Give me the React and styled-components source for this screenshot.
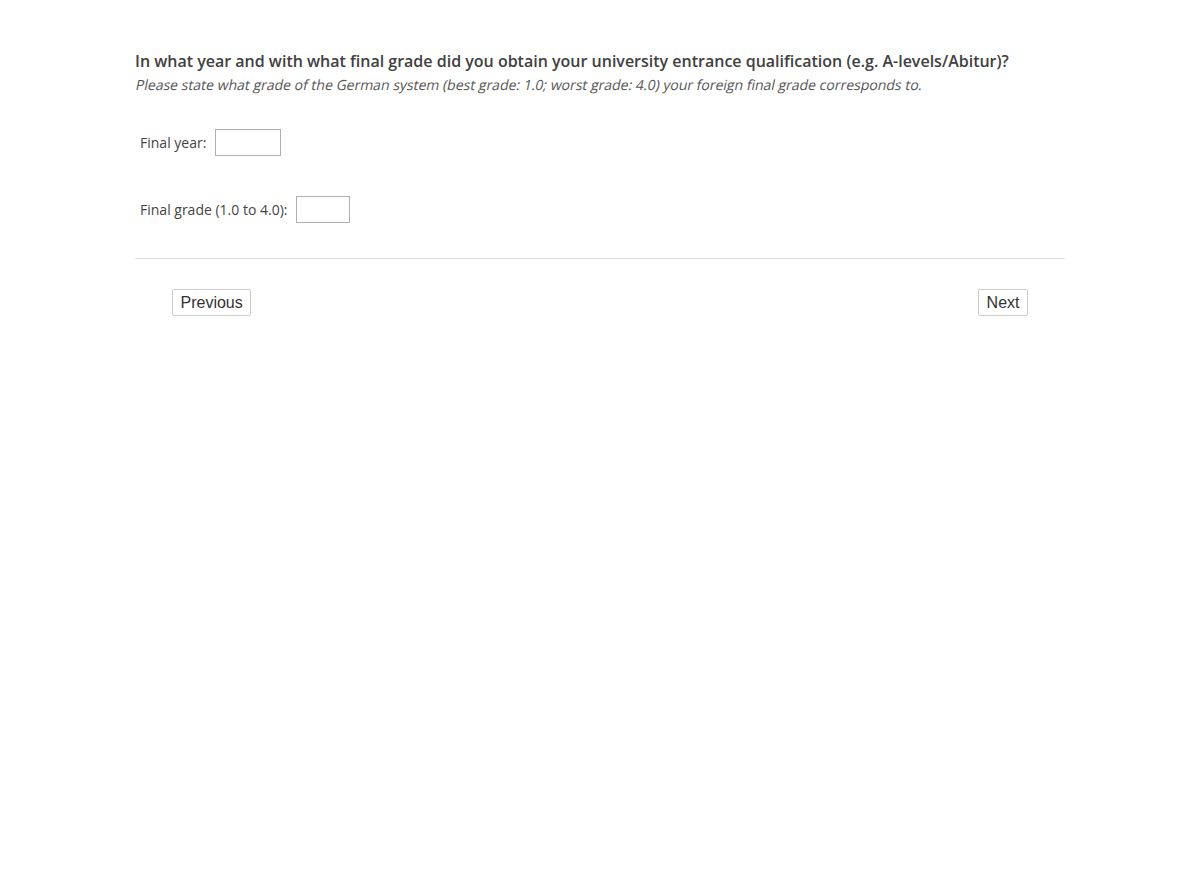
import React from 'react';
import styled, {createGlobalStyle} from 'styled-components';

const Global = createGlobalStyle`
  html, body {
    margin: 0;
    padding: 0;
    background: #fff;
  }
  body {
    font-family: "Open Sans", "Liberation Sans", sans-serif;
    color: #444;
  }
`;

const Page = styled.div`
  width: 930px;
  margin: 0 auto;
  padding-top: 50px;
`;

const Title = styled.h1`
  margin: 0;
  font-size: 16px;
  font-weight: 600;
  line-height: 22px;
  color: #404040;
`;

// the reference shows a slanted regular face, not the true italic
const Hint = styled.p`
  display: inline-block;
  margin: 2px 0 0;
  font-size: 14px;
  line-height: 22px;
  color: #555;
  transform: skewX(-12deg);
  transform-origin: 0 75%;
`;

const Fields = styled.div`
  display: flex;
  flex-direction: column;
  gap: 40px;
  padding: 33px 0 35px 5px;
`;

const Field = styled.label`
  display: flex;
  align-items: center;
  gap: 8.5px;
  font-size: 14px;
  color: #444;
`;

const Input = styled.input`
  box-sizing: border-box;
  width: ${p => p.w}px;
  height: 27px;
  border: 1px solid #b0b0b0;
  background: #fff;
  margin: 0;
  padding: 2px 4px;
  font: inherit;
`;

const Divider = styled.hr`
  margin: 0;
  border: 0;
  border-top: 1px solid #ddd;
`;

const Nav = styled.div`
  display: flex;
  justify-content: space-between;
  padding: 30px 37px 0;
`;

const Button = styled.button`
  height: 27px;
  padding: 0 7.5px;
  background: #fff;
  border: 1px solid #ccc;
  border-radius: 2px;
  font-family: "Liberation Sans", Arial, sans-serif;
  font-size: 16px;
  color: #333;
  cursor: pointer;
`;

export default function App() {
  return (
    <Page>
      <Global />
      <Title>In what year and with what final grade did you obtain your university entrance qualification (e.g. A-levels/Abitur)?</Title>
      <Hint>Please state what grade of the German system (best grade: 1.0; worst grade: 4.0) your foreign final grade corresponds to.</Hint>
      <Fields>
        <Field>Final year: <Input w={66} /></Field>
        <Field>Final grade (1.0 to 4.0): <Input w={54} /></Field>
      </Fields>
      <Divider />
      <Nav>
        <Button>Previous</Button>
        <Button>Next</Button>
      </Nav>
    </Page>
  );
}
